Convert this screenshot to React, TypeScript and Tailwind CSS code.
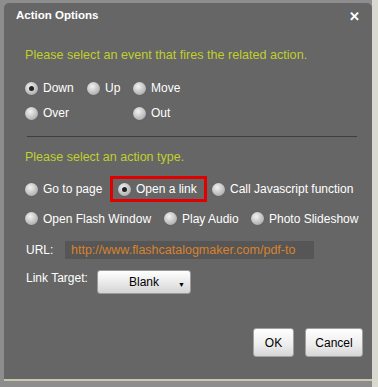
import React from "react";

const font = { fontFamily: '"Liberation Sans", Arial, sans-serif' };

function Radio({ checked = false }: { checked?: boolean }) {
  return (
    <span className="relative inline-block w-[13px] h-[13px] rounded-full shrink-0 bg-[radial-gradient(circle_at_40%_35%,#f2f2f2_0%,#c9c9c9_45%,#9a9a9a_100%)] shadow-[0_0_1px_#555]">
      {checked && (
        <span className="absolute left-[4px] top-[4px] w-[5px] h-[5px] rounded-full bg-[#222]" />
      )}
    </span>
  );
}

function Opt({ label, checked = false, className = "" }: { label: string; checked?: boolean; className?: string }) {
  return (
    <span className={"flex items-center gap-[5px] whitespace-nowrap " + className}>
      <Radio checked={checked} />
      <span className="text-white text-[12px] leading-none">{label}</span>
    </span>
  );
}

export default function App() {
  return (
    <div className="w-[378px] h-[387px] bg-[#8d8d8d] flex" style={font}>
      <div className="ml-[4px] mt-[3px] w-[368px] h-[378px] bg-[#666666] rounded-t-[5px] flex flex-col border-b-[2px] border-[#c9c7ad] relative">
        <div className="h-[26px] flex items-center justify-between pl-[12px] pr-[12px]">
          <span className="text-white font-bold text-[11.5px]">Action Options</span>
          <span className="text-white font-bold text-[13px] leading-none">✕</span>
        </div>
        <div className="pl-[21px] pr-[4px] flex flex-col">
          <div className="mt-[20px] text-[#c0cf2c] text-[12.6px] leading-none whitespace-nowrap">Please select an event that fires the related action.</div>
          <div className="mt-[20px] flex items-center">
            <Opt label="Down" checked className="w-[62px]" />
            <Opt label="Up" className="w-[46px]" />
            <Opt label="Move" />
          </div>
          <div className="mt-[12px] flex items-center">
            <Opt label="Over" className="w-[108px]" />
            <Opt label="Out" />
          </div>
          <div className="mt-[16px] h-[1px] bg-[#3e3e3e] w-[330px] ml-[2px]" />
          <div className="mt-[14px] text-[#c0cf2c] text-[12.5px] leading-none whitespace-nowrap">Please select an action type.</div>
          <div className="mt-[13px] flex items-center">
            <Opt label="Go to page" className="w-[85px]" />
            <span className="border-[3px] border-[#e00000] h-[26px] w-[97px] flex items-center pl-[5px]">
              <Opt label="Open a link" checked />
            </span>
            <Opt label="Call Javascript function" className="ml-[5px]" />
          </div>
          <div className="mt-[10px] flex items-center">
            <Opt label="Open Flash Window" className="w-[139px]" />
            <Opt label="Play Audio" className="w-[87px]" />
            <Opt label="Photo Slideshow" />
          </div>
          <div className="mt-[16px] flex items-center">
            <span className="text-white text-[12px] w-[39px] ml-[1px]">URL:</span>
            <span className="h-[18px] w-[249px] bg-[#565656] text-[#d9822d] text-[12.5px] flex items-center pl-[6px] overflow-hidden whitespace-nowrap">http://www.flashcatalogmaker.com/pdf-to</span>
          </div>
          <div className="mt-[11px] flex items-start">
            <span className="text-white text-[12px] w-[71px] ml-[1px] mt-[-1px]">Link Target:</span>
            <span className="relative h-[24px] w-[94px] rounded-[3px] bg-[linear-gradient(#ffffff,#e6e6e6_60%,#d4d4d4)] border border-[#9a9a9a] flex items-center justify-center text-black text-[12px]">
              Blank
              <span className="absolute right-[5px] top-[10px] text-[7px] leading-none">▼</span>
            </span>
          </div>
        </div>
        <div className="mt-auto mb-[22px] flex justify-end gap-[11px] pr-[9px]">
          <span className="h-[29px] w-[41px] rounded-[3px] bg-[linear-gradient(#ffffff,#ececec_60%,#d6d6d6)] border border-[#a0a0a0] flex items-center justify-center text-black text-[12px]">OK</span>
          <span className="h-[29px] w-[58px] rounded-[3px] bg-[linear-gradient(#ffffff,#ececec_60%,#d6d6d6)] border border-[#a0a0a0] flex items-center justify-center text-black text-[12px]">Cancel</span>
        </div>
      </div>
      <div className="w-[6px] h-full bg-[#d9d9d2]" />
    </div>
  );
}
